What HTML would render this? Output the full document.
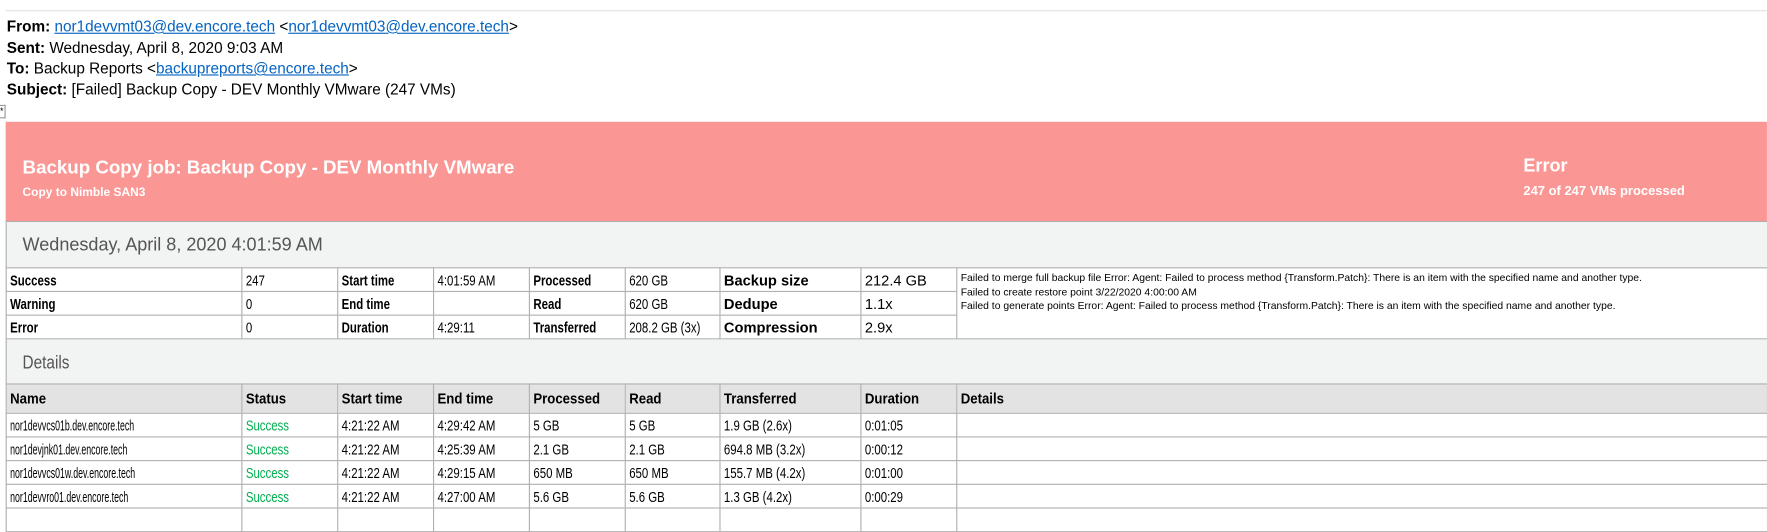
<!DOCTYPE html>
<html><head><meta charset="utf-8"><style>
body{margin:0;width:1767px;height:510px;background:#fff;position:relative;overflow:hidden;font-family:"Liberation Sans",sans-serif;}
#w{position:absolute;left:0;top:0;width:1567px;height:452px;transform:scale(1.1276);transform-origin:0 0}
.hd{position:absolute;left:6px;font-size:13.6px;color:#000;white-space:nowrap}
.hd b{font-weight:bold}
a{color:#0563c1;text-decoration:underline}
.band{position:absolute;left:5px;width:1562px}
table{position:absolute;left:5px;border-collapse:collapse;table-layout:fixed;width:1563px}
td{border:1px solid #b0b0b0;padding:0 0 0 3px;font-size:13px;white-space:nowrap;overflow:hidden;vertical-align:middle}
.n{display:inline-block;transform:scaleX(.78);transform-origin:left center}
.m{display:inline-block;transform:scaleX(.6);transform-origin:left center}
.h .n{transform:scaleX(.9)}
.b{font-weight:bold}
.g{color:#00b050}
.s{font-size:13px}
.err{font-size:9.2px;line-height:12.5px;vertical-align:top;padding-top:2px}
</style></head><body><div id="w">
<div style="position:absolute;left:5px;top:9px;width:1562px;height:1px;background:#e1e1e1"></div>
<div class="hd" style="top:16px"><b>From:</b> <a>nor1devvmt03@dev.encore.tech</a> &lt;<a>nor1devvmt03@dev.encore.tech</a>&gt;</div>
<div class="hd" style="top:35px"><b>Sent:</b> Wednesday, April 8, 2020 9:03 AM</div>
<div class="hd" style="top:53px"><b>To:</b> Backup Reports &lt;<a>backupreports@encore.tech</a>&gt;</div>
<div class="hd" style="top:72px"><b>Subject:</b> [Failed] Backup Copy - DEV Monthly VMware (247 VMs)</div>
<div style="position:absolute;left:0;top:93px;width:4px;height:10px;border:1px solid #999;border-left:none;font-size:8px;line-height:10px">*</div>

<div class="band" style="top:108px;height:88px;background:#fa9795;border-bottom:1px solid #b0b0b0"></div>
<div style="position:absolute;left:20px;top:139px;color:#fff;font-weight:bold;font-size:16.6px">Backup Copy job: Backup Copy - DEV Monthly VMware</div>
<div style="position:absolute;left:20px;top:165px;color:#fff;font-weight:bold;font-size:10.6px">Copy to Nimble SAN3</div>
<div style="position:absolute;left:1351px;top:139px;color:#fff;font-weight:bold;font-size:16px">Error</div>
<div style="position:absolute;left:1351px;top:164px;color:#fff;font-weight:bold;font-size:11.5px">247 of 247 VMs processed</div>

<div class="band" style="top:197px;height:40px;background:#f2f4f3;border-left:1px solid #b0b0b0"></div>
<div style="position:absolute;left:20px;top:209px;color:#555;font-size:16px">Wednesday, April 8, 2020 4:01:59 AM</div>

<table style="top:237px">
<colgroup><col style="width:209px"><col style="width:85px"><col style="width:85px"><col style="width:85px"><col style="width:85px"><col style="width:84px"><col style="width:125px"><col style="width:85px"><col></colgroup>
<tr style="height:21px"><td class="b"><span class="n">Success</span></td><td><span class="n">247</span></td><td class="b"><span class="n">Start time</span></td><td><span class="n">4:01:59 AM</span></td><td class="b"><span class="n">Processed</span></td><td><span class="n">620 GB</span></td><td class="b s">Backup size</td><td class="s">212.4 GB</td><td rowspan="3" class="err">Failed to merge full backup file Error: Agent: Failed to process method {Transform.Patch}: There is an item with the specified name and another type.<br>Failed to create restore point 3/22/2020 4:00:00 AM<br>Failed to generate points Error: Agent: Failed to process method {Transform.Patch}: There is an item with the specified name and another type.<br>&nbsp;</td></tr>
<tr style="height:21px"><td class="b"><span class="n">Warning</span></td><td><span class="n">0</span></td><td class="b"><span class="n">End time</span></td><td></td><td class="b"><span class="n">Read</span></td><td><span class="n">620 GB</span></td><td class="b s">Dedupe</td><td class="s">1.1x</td></tr>
<tr style="height:21px"><td class="b"><span class="n">Error</span></td><td><span class="n">0</span></td><td class="b"><span class="n">Duration</span></td><td><span class="n">4:29:11</span></td><td class="b"><span class="n">Transferred</span></td><td><span class="n">208.2 GB (3x)</span></td><td class="b s">Compression</td><td class="s">2.9x</td></tr>
</table>

<div class="band" style="top:301px;height:39px;background:#f2f4f3;border-left:1px solid #b0b0b0"></div>
<div style="position:absolute;left:20px;top:314px;color:#555;font-size:16px"><span class="n" style="transform:scaleX(.85)">Details</span></div>

<table style="top:340px">
<colgroup><col style="width:209px"><col style="width:85px"><col style="width:85px"><col style="width:85px"><col style="width:85px"><col style="width:84px"><col style="width:125px"><col style="width:85px"><col></colgroup>
<tr style="height:26px;background:#e3e3e3" class="b h"><td><span class="n">Name</span></td><td><span class="n">Status</span></td><td><span class="n">Start time</span></td><td><span class="n">End time</span></td><td><span class="n">Processed</span></td><td><span class="n">Read</span></td><td><span class="n">Transferred</span></td><td><span class="n">Duration</span></td><td><span class="n">Details</span></td></tr>
<tr style="height:21px"><td><span class="m">nor1devvcs01b.dev.encore.tech</span></td><td class="g"><span class="n">Success</span></td><td><span class="n">4:21:22 AM</span></td><td><span class="n">4:29:42 AM</span></td><td><span class="n">5 GB</span></td><td><span class="n">5 GB</span></td><td><span class="n">1.9 GB (2.6x)</span></td><td><span class="n">0:01:05</span></td><td></td></tr>
<tr style="height:21px"><td><span class="m">nor1devjnk01.dev.encore.tech</span></td><td class="g"><span class="n">Success</span></td><td><span class="n">4:21:22 AM</span></td><td><span class="n">4:25:39 AM</span></td><td><span class="n">2.1 GB</span></td><td><span class="n">2.1 GB</span></td><td><span class="n">694.8 MB (3.2x)</span></td><td><span class="n">0:00:12</span></td><td></td></tr>
<tr style="height:21px"><td><span class="m">nor1devvcs01w.dev.encore.tech</span></td><td class="g"><span class="n">Success</span></td><td><span class="n">4:21:22 AM</span></td><td><span class="n">4:29:15 AM</span></td><td><span class="n">650 MB</span></td><td><span class="n">650 MB</span></td><td><span class="n">155.7 MB (4.2x)</span></td><td><span class="n">0:01:00</span></td><td></td></tr>
<tr style="height:21px"><td><span class="m">nor1devvro01.dev.encore.tech</span></td><td class="g"><span class="n">Success</span></td><td><span class="n">4:21:22 AM</span></td><td><span class="n">4:27:00 AM</span></td><td><span class="n">5.6 GB</span></td><td><span class="n">5.6 GB</span></td><td><span class="n">1.3 GB (4.2x)</span></td><td><span class="n">0:00:29</span></td><td></td></tr>
<tr style="height:21px"><td></td><td></td><td></td><td></td><td></td><td></td><td></td><td></td><td></td></tr>
</table>
</div></body></html>
